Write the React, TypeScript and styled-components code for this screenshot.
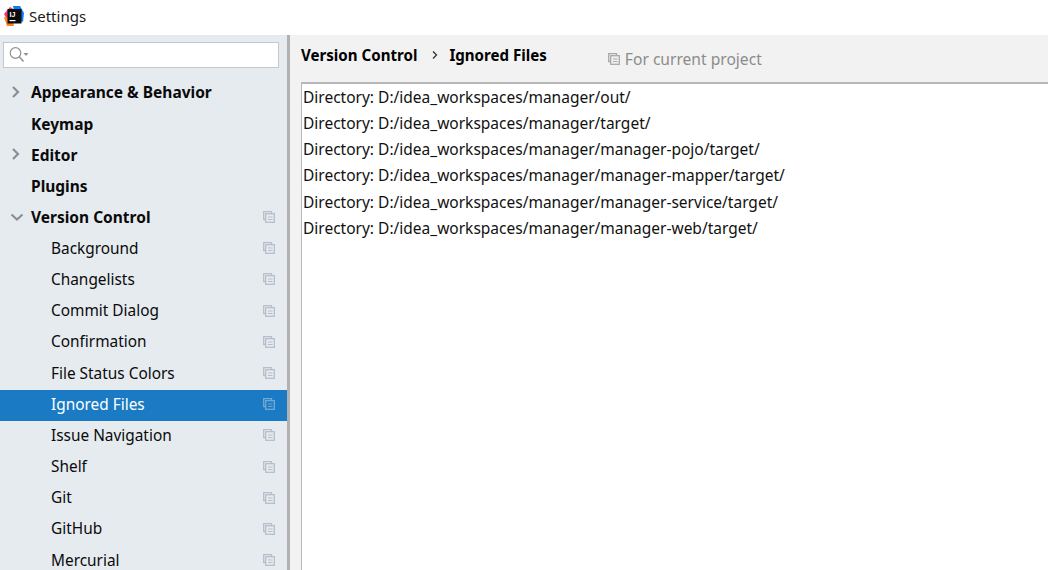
import React from "react";
import styled, { createGlobalStyle } from "styled-components";

const GlobalStyle = createGlobalStyle`
  html, body {
    margin: 0;
    padding: 0;
    height: 100%;
    overflow: hidden;
    background: #ffffff;
  }
  #root {
    height: 100%;
  }
`;

const Window = styled.div`
  width: 1048px;
  height: 570px;
  display: flex;
  flex-direction: column;
  overflow: hidden;
  font-family: "Noto Sans", "Open Sans", sans-serif;
  color: #000;
`;

const TitleBar = styled.div`
  height: 35px;
  flex: none;
  display: flex;
  align-items: center;
  gap: 5px;
  padding-left: 4px;
  padding-bottom: 4px;
  box-sizing: border-box;
  background: #fff;
  font-size: 15px;
  color: #1a1a1a;
`;

const Body = styled.div`
  flex: 1;
  display: flex;
  min-height: 0;
`;

const Sidebar = styled.div`
  width: 287px;
  flex: none;
  background: #e6ebf0;
  border-right: 3px solid #b1b1b1;
  overflow: hidden;
  padding-top: 7px;
`;

const SearchBox = styled.div`
  width: 269px;
  height: 24px;
  margin-left: 3px;
  display: flex;
  align-items: center;
  padding-left: 5px;
  background: #fff;
  border: 1px solid #c4c8cb;
`;

const Tree = styled.div`
  margin-top: 10px;
`;

const Row = styled.div<{ $selected?: boolean; $child?: boolean }>`
  height: 31.2px;
  display: flex;
  align-items: center;
  padding-left: ${(p) => (p.$child ? "51px" : "31px")};
  padding-right: 12px;
  padding-bottom: 2.5px;
  position: relative;
  box-sizing: border-box;
  font-size: ${(p) => (p.$child ? "15.4px" : "15.5px")};
  font-weight: ${(p) => (p.$child ? 400 : 700)};
  background: ${(p) => (p.$selected ? "#1a7bc4" : "transparent")};
  color: ${(p) => (p.$selected ? "#fff" : "#0a0a0a")};
`;

const Label = styled.span`
  flex: 1;
  white-space: nowrap;
`;

const Arrow = styled.svg`
  position: absolute;
  left: 10px;
  top: 8px;
`;

const Content = styled.div`
  flex: 1;
  min-width: 0;
  background: #f2f2f2;
  display: flex;
  flex-direction: column;
`;

const Breadcrumb = styled.div`
  height: 47px;
  flex: none;
  display: flex;
  align-items: center;
  padding-left: 11px;
  padding-bottom: 7px;
  box-sizing: border-box;
  font-size: 15.1px;
  font-weight: 700;
`;

const Separator = styled.svg`
  margin: 0 11px 0 15px;
`;

const ProjectHint = styled.div`
  display: flex;
  align-items: center;
  gap: 5px;
  margin-left: 61px;
  margin-top: 8px;
  font-size: 15.6px;
  font-weight: 400;
  color: #8c8c8c;
`;

const ListPanel = styled.div`
  flex: 1;
  margin-left: 11px;
  background: #fff;
  border-top: 2px solid #b8b8b8;
  border-left: 1px solid #b8b8b8;
`;

const ListRow = styled.div`
  height: 26.2px;
  display: flex;
  align-items: center;
  padding-left: 1px;
  font-size: 15.5px;
  color: #111;
  white-space: nowrap;
  position: relative;
  top: -0.2px;
`;

const CopyIcon: React.FC<{ color: string }> = ({ color }) => (
  <svg width="12" height="12" viewBox="0 0 12 12" fill="none" stroke={color} strokeWidth="1.300">
    <path d="M8.500 2.500V.7H.7v7.800h1.800" />
    <rect x="2.700" y="2.700" width="8.600" height="8.600" />
    <path d="M5 6h4.500M5 8.500h4.500" strokeWidth="1" />
  </svg>
);

const IdeaLogo = () => (
  <svg width="20" height="20" viewBox="0 0 20 20">
    <path d="M0 8 6 1l5 3-7 11z" fill="#f0386b" />
    <path d="M9 0h7l4 7-1 9-7-3z" fill="#087cfa" />
    <path d="M0 11l8 1 2 8H3z" fill="#fc801d" />
    <rect x="3.500" y="3" width="14" height="14.500" fill="#0b0b0b" />
    <text x="5.500" y="11" fontFamily="Liberation Sans" fontWeight="700" fontSize="7" fill="#fff">
      IJ
    </text>
    <rect x="5.500" y="14" width="6" height="1.200" fill="#fff" />
  </svg>
);

const treeItems: { label: string; child?: boolean; arrow?: "right" | "down"; copy?: boolean; selected?: boolean }[] = [
  { label: "Appearance & Behavior", arrow: "right" },
  { label: "Keymap" },
  { label: "Editor", arrow: "right" },
  { label: "Plugins" },
  { label: "Version Control", arrow: "down", copy: true },
  { label: "Background", child: true, copy: true },
  { label: "Changelists", child: true, copy: true },
  { label: "Commit Dialog", child: true, copy: true },
  { label: "Confirmation", child: true, copy: true },
  { label: "File Status Colors", child: true, copy: true },
  { label: "Ignored Files", child: true, copy: true, selected: true },
  { label: "Issue Navigation", child: true, copy: true },
  { label: "Shelf", child: true, copy: true },
  { label: "Git", child: true, copy: true },
  { label: "GitHub", child: true, copy: true },
  { label: "Mercurial", child: true, copy: true },
];

const ignoredPaths = [
  "D:/idea_workspaces/manager/out/",
  "D:/idea_workspaces/manager/target/",
  "D:/idea_workspaces/manager/manager-pojo/target/",
  "D:/idea_workspaces/manager/manager-mapper/target/",
  "D:/idea_workspaces/manager/manager-service/target/",
  "D:/idea_workspaces/manager/manager-web/target/",
];

export default function App() {
  return (
    <Window>
      <GlobalStyle />
      <TitleBar>
        <IdeaLogo />
        Settings
      </TitleBar>
      <Body>
        <Sidebar>
          <SearchBox>
            <svg width="20" height="18" viewBox="0 0 20 18" fill="none" stroke="#8d9296">
              <circle cx="6.500" cy="7" r="5.300" strokeWidth="1.200" />
              <path d="M10.500 11l4 4.500" strokeWidth="1.500" />
              <path d="M14.500 7h5l-2.500 3z" fill="#8d9296" stroke="none" />
            </svg>
          </SearchBox>
          <Tree>
            {treeItems.map((item) => (
              <Row key={item.label} $child={item.child} $selected={item.selected}>
                {item.arrow === "right" && (
                  <Arrow width="12" height="12" viewBox="0 0 12 12" fill="none" stroke="#8a8f94" strokeWidth="2.200">
                    <path d="M3 1 8 6l-5 5" />
                  </Arrow>
                )}
                {item.arrow === "down" && (
                  <Arrow width="14" height="12" viewBox="0 0 14 12" fill="none" stroke="#8a8f94" strokeWidth="2.200">
                    <path d="M1.500 3.500 7 8.500l5.500-5" />
                  </Arrow>
                )}
                <Label>{item.label}</Label>
                {item.copy && <CopyIcon color={item.selected ? "#74a9d6" : "#b4bfc9"} />}
              </Row>
            ))}
          </Tree>
        </Sidebar>
        <Content>
          <Breadcrumb>
            Version Control
            <Separator width="6" height="10" viewBox="0 0 6 10" fill="none" stroke="#333" strokeWidth="1.300">
              <path d="M1 1.500 4.500 5 1 8.500" />
            </Separator>
            Ignored Files
            <ProjectHint>
              <CopyIcon color="#a8a8a8" />
              For current project
            </ProjectHint>
          </Breadcrumb>
          <ListPanel>
            {ignoredPaths.map((path) => (
              <ListRow key={path}>Directory: {path}</ListRow>
            ))}
          </ListPanel>
        </Content>
      </Body>
    </Window>
  );
}
